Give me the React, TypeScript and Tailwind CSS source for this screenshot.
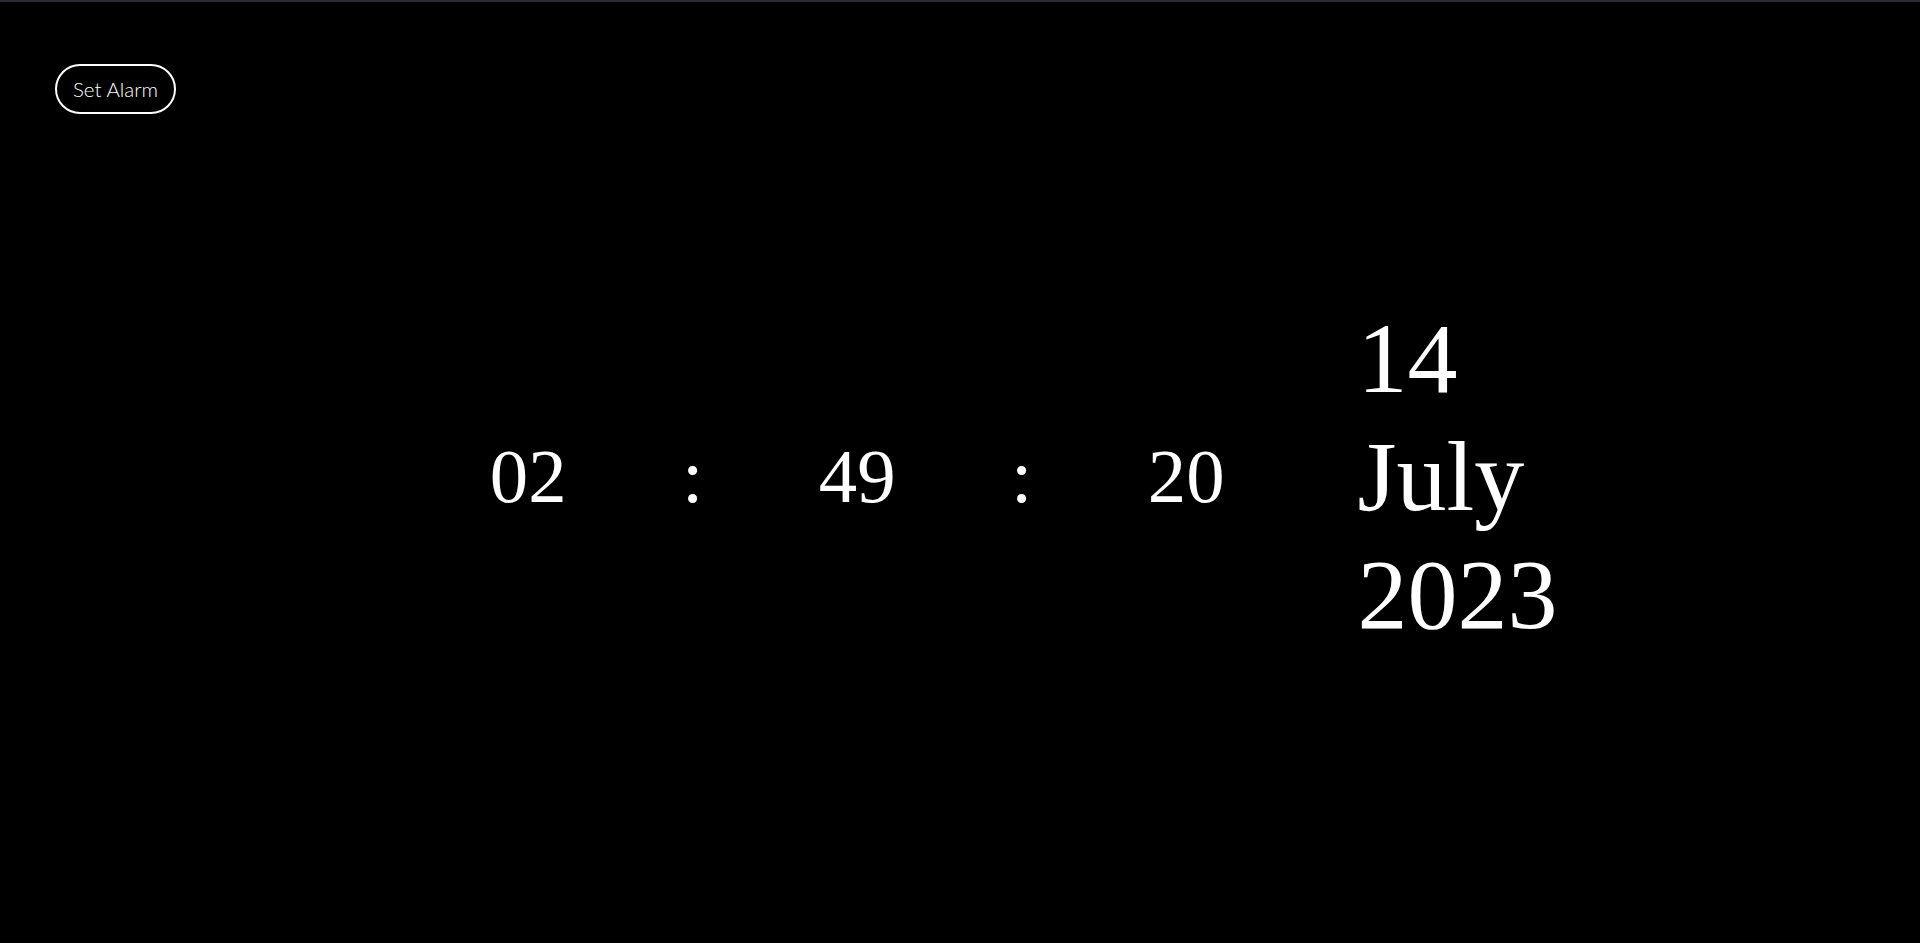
import React from "react";

export default function App() {
  const cells = ["02", ":", "49", ":", "20"];
  return (
    <div className="flex h-screen w-full flex-col overflow-hidden bg-black text-white">
      <div className="h-[2px] w-full shrink-0 bg-[#2b2a38]" />
      <header className="shrink-0 pl-[55px] pt-[62px]">
        <button
          className="h-[50px] rounded-full border-2 border-white px-[16px] pt-[1px] text-[20.5px] font-light leading-none text-white"
          style={{ fontFamily: "Lato, 'Noto Sans', sans-serif" }}
        >
          Set Alarm
        </button>
      </header>
      <main
        className="flex items-center pl-[446px] pt-[186px]"
        style={{ fontFamily: "'Liberation Serif', 'Times New Roman', serif" }}
      >
        <div className="flex items-center">
          {cells.map((c, i) => (
            <div key={i} className="w-[164.5px] text-center text-[76.8px]">
              {c}
            </div>
          ))}
        </div>
        <div className="ml-[89px] text-[100px] leading-[118px]">
          <div>14</div>
          <div>July</div>
          <div>2023</div>
        </div>
      </main>
    </div>
  );
}
